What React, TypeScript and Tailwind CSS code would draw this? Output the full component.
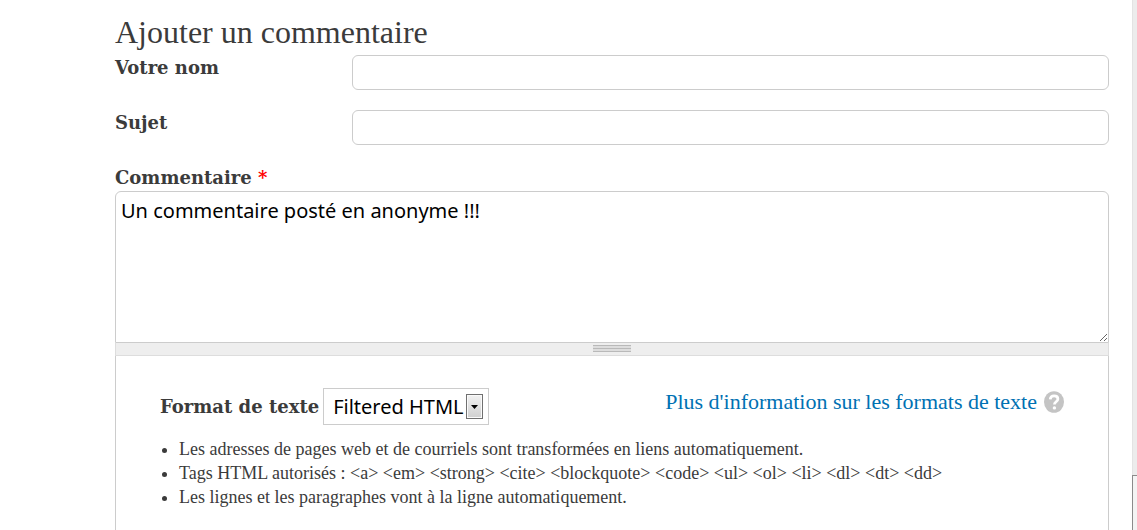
import type { ReactNode } from "react";

const guidelines = [
  "Les adresses de pages web et de courriels sont transformées en liens automatiquement.",
  "Tags HTML autorisés : <a> <em> <strong> <cite> <blockquote> <code> <ul> <ol> <li> <dl> <dt> <dd>",
  "Les lignes et les paragraphes vont à la ligne automatiquement.",
];

const Label = ({ htmlFor, children }: { htmlFor: string; children: ReactNode }) => (
  <label
    htmlFor={htmlFor}
    className="text-[18px] leading-[26px] font-bold whitespace-nowrap font-['DejaVu_Serif',serif]"
  >
    {children}
  </label>
);

const TextRow = ({ id, label }: { id: string; label: string }) => (
  <div className="grid grid-cols-[237px_1fr] items-start mb-5">
    <Label htmlFor={id}>{label}</Label>
    <input
      id={id}
      type="text"
      className="w-full h-[35px] px-1 border border-[#ccc] rounded-md bg-white text-black outline-none"
    />
  </div>
);

const HelpIcon = () => (
  <svg viewBox="0 0 20 22" className="w-5 h-[22px]" aria-hidden="true">
    <ellipse cx="10" cy="11" rx="10" ry="10.8" fill="#c4c4c4" />
    <path
      d="M6.2 8.4C6.4 5.9 8 4.9 10.1 4.9c2.2 0 3.8 1.2 3.8 3.1 0 2.7-3.5 2.9-3.5 5.5"
      fill="none"
      stroke="#fff"
      strokeWidth="2.7"
    />
    <circle cx="10.4" cy="16.9" r="1.7" fill="#fff" />
  </svg>
);

const App = () => {
  return (
    <div className="flex h-screen overflow-hidden bg-white text-[#3b3b3b] font-['Liberation_Serif',serif]">
      <form className="flex flex-col flex-1 min-w-0 pt-4 pl-[115px] pr-[23px]">
        <h2 className="text-[32px] leading-8 mb-[7px]">Ajouter un commentaire</h2>

        <TextRow id="name" label="Votre nom" />
        <TextRow id="subject" label="Sujet" />

        {/* Comment body */}
        <Label htmlFor="comment">
          Commentaire <span className="text-[#f00]">*</span>
        </Label>
        <textarea
          id="comment"
          defaultValue="Un commentaire posté en anonyme !!!"
          className="block shrink-0 w-full h-[152px] px-[5px] py-[6px] border border-[#ccc] rounded-t-md bg-white text-black text-[20px] leading-[26px] font-['Noto_Sans',sans-serif] resize-y outline-none"
        />
        <div className="flex shrink-0 items-start justify-center h-[13px] pt-[2px] border border-t-0 border-[#ddd] bg-[#eee]">
          <svg viewBox="0 0 38 7" className="w-[38px] h-[7px]" shapeRendering="crispEdges" aria-hidden="true">
            <path d="M0 0h38v7H0z" fill="#ddd" />
            <path d="M0 0h38v1H0zM0 3h38v1H0zM0 6h38v1H0z" fill="#b9b9b9" />
          </svg>
        </div>

        {/* Text format */}
        <div className="flex-1 px-11 pt-8 border-x border-[#ccc]">
          <div className="flex items-start justify-between">
            <div className="flex items-center gap-1">
              <Label htmlFor="format">Format de texte</Label>
              <div className="relative">
                <select
                  id="format"
                  defaultValue="filtered"
                  className="block appearance-none w-[166px] h-[37px] pl-[9px] border border-[#ccc] bg-white text-black text-[20px] font-['Noto_Sans',sans-serif] outline-none"
                >
                  <option value="filtered">Filtered HTML</option>
                  <option value="plain">Plain text</option>
                </select>
                <span className="absolute right-[6px] inset-y-[6px] flex w-[17px] items-center justify-center border border-[#707070] bg-linear-to-b from-[#f2f2f2] to-[#cfcfcf] shadow-[inset_0_0_0_1px_#fafafa] pointer-events-none">
                  <svg viewBox="0 0 7 4" className="w-[7px] h-1" aria-hidden="true">
                    <path d="M0 0h7L3.5 4z" fill="#000" />
                  </svg>
                </span>
              </div>
            </div>
            <a href="#formats" className="flex items-center gap-[7px] mt-[2px] text-[22px] leading-6 text-[#0071b3]">
              Plus d'information sur les formats de texte
              <HelpIcon />
            </a>
          </div>

          <ul className="mt-3 pl-[19px] list-disc text-[18px] leading-6">
            {guidelines.map((text) => (
              <li key={text}>{text}</li>
            ))}
          </ul>
        </div>
      </form>

      {/* Scrollbar track */}
      <div className="flex flex-col w-[5px] border-l border-[#e3e3e3] bg-[#ececec]">
        <div className="mt-[475px] -ml-px flex-1 border-t border-l border-[#8b8b8b] bg-[#f4f4f4]" />
      </div>
    </div>
  );
};

export default App;
